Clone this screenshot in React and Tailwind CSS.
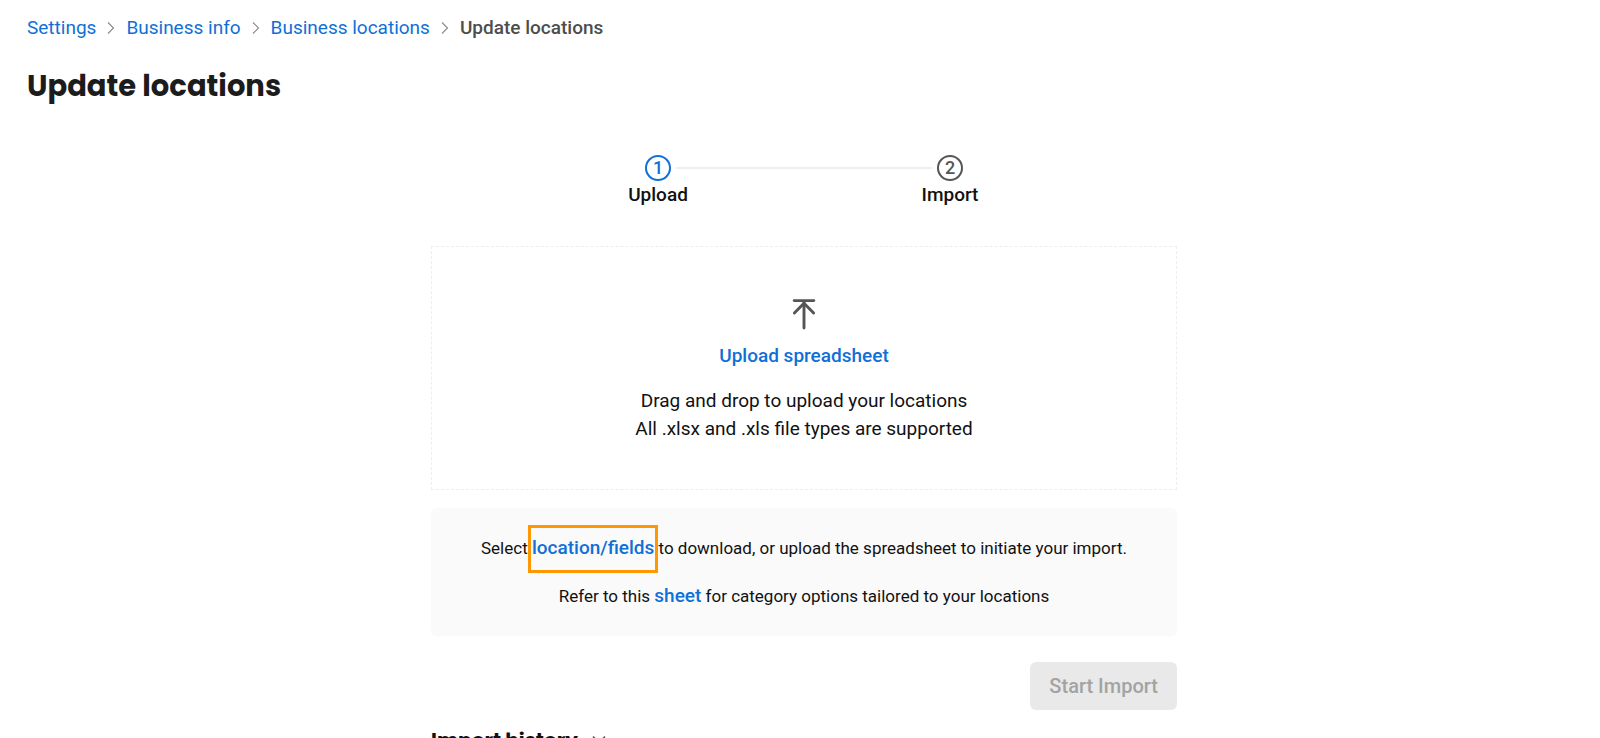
const breadcrumbs = ["Settings", "Business info", "Business locations"];

function Chevron() {
    return (
        <svg width="8" height="14" viewBox="0 0 8 14" fill="none" stroke="#8a8a8a" strokeWidth="1.1" aria-hidden="true">
            <path d="M1 1.5L6.5 7L1 12.5" />
        </svg>
    );
}

function UploadIcon() {
    return (
        <svg width="24" height="32" viewBox="0 0 24 32" fill="none" stroke="#555555" strokeWidth="2.9" strokeLinecap="round" aria-hidden="true">
            <path d="M2.2 2.6H21.8" />
            <path d="M12 4.6V30" />
            <path d="M2.4 15L12 5.2L21.6 15" strokeLinejoin="round" />
        </svg>
    );
}

function Step({ number, label, active }) {
    return (
        <li className="flex w-15 flex-col items-center">
            <span
                className={`flex size-[26px] items-center justify-center rounded-full border-2 text-lg leading-none font-medium ${active ? "border-[#0f70d7] text-[#0f70d7]" : "border-[#555555] text-[#555555]"}`}
            >
                {number}
            </span>
            <span className="text-[19px] leading-7 font-medium text-[#111111]">{label}</span>
        </li>
    );
}

export default function App() {
    return (
        <div className="h-screen overflow-hidden bg-white pt-3 pr-[19px] pl-[27px] font-[Roboto,sans-serif] text-[#111111]">

            <nav aria-label="Breadcrumb">
                <ol className="flex items-center text-[19px] leading-8">
                    {breadcrumbs.map((item) => (
                        <li key={item} className="flex items-center">
                            <a href="#" className="text-[#0f70d7] hover:underline">{item}</a>
                            <span className="px-[11px]"><Chevron /></span>
                        </li>
                    ))}
                    <li className="font-medium text-[#4d4d4d]" aria-current="page">Update locations</li>
                </ol>
            </nav>

            <h1 className="mt-5 font-[Poppins,Inter,sans-serif] text-[29px] leading-11 font-bold text-[#1c1c1c]">
                Update locations
            </h1>

            <main className="mx-auto mt-[47px] max-w-[746px]">

                {/* Stepper */}
                <ol className="flex justify-center">
                    <Step number={1} label="Upload" active />
                    <li aria-hidden="true" className="-mx-3 mt-3 h-0.5 w-64 bg-[#eeeeee]" />
                    <Step number={2} label="Import" />
                </ol>

                {/* Drop zone */}
                <section className="mt-[37px] flex flex-col items-center border border-dashed border-[#eeeeee] pt-[51px] pb-[46px] text-center">
                    <UploadIcon />
                    <button type="button" className="mt-3 cursor-pointer text-[19px] leading-7 font-medium text-[#0f70d7]">
                        Upload spreadsheet
                    </button>
                    <p className="mt-[17px] text-[19px] leading-7">
                        Drag and drop to upload your locations
                        <br />
                        All .xlsx and .xls file types are supported
                    </p>
                </section>

                <section className="mt-[18px] rounded-md bg-[#fafafa] py-7 text-center text-[17px] leading-6">
                    <p>
                        Select{" "}
                        <a href="#" className="relative text-[19px] font-medium text-[#0f70d7]">
                            location/fields
                            <span className="absolute -inset-x-1 -top-[11px] -bottom-[14px] border-3 border-[#ff9800]" />
                        </a>{" "}
                        to download, or upload the spreadsheet to initiate your import.
                    </p>
                    <p className="mt-6">
                        Refer to this{" "}
                        <a href="#" className="text-[19px] font-medium text-[#0f70d7]">sheet</a>{" "}
                        for category options tailored to your locations
                    </p>
                </section>

                <div className="mt-[26px] flex justify-end">
                    <button type="button" disabled className="rounded-md bg-[#e9e9e9] px-[19px] text-xl leading-[48px] font-medium text-[#a3a3a3]">
                        Start Import
                    </button>
                </div>

                <div className="mt-[14px] flex items-center gap-3">
                    <h2 className="font-[Poppins,Inter,sans-serif] text-xl leading-8 font-bold">Import history</h2>
                    <svg width="18" height="18" viewBox="0 0 18 18" fill="none" stroke="#555555" strokeWidth="1.5" aria-hidden="true">
                        <path d="M3 5.5L9 11.5L15 5.5" />
                    </svg>
                </div>

            </main>
        </div>
    );
}
